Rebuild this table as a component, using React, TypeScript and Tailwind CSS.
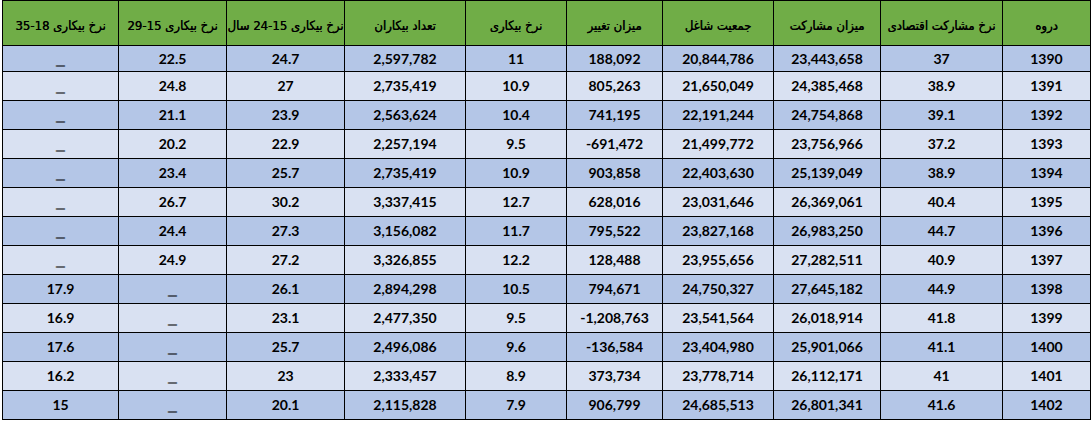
const headers = [
  'دروه',
  'نرخ مشارکت اقتصادی',
  'میزان مشارکت',
  'جمعیت شاغل',
  'میزان تغییر',
  'نرخ بیکاری',
  'تعداد بیکاران',
  'نرخ بیکاری 15-24 سال',
  'نرخ بیکاری 15-29',
  'نرخ بیکاری 18-35',
];

const widths = ['w-[88px]', 'w-[122px]', 'w-[107px]', 'w-[111px]', 'w-[96px]', 'w-[101px]', 'w-[121px]', 'w-[118px]', 'w-[108px]', 'w-[116px]'];

const rows = [
  ['1390', '37', '23,443,658', '20,844,786', '188,092', '11', '2,597,782', '24.7', '22.5', '_'],
  ['1391', '38.9', '24,385,468', '21,650,049', '805,263', '10.9', '2,735,419', '27', '24.8', '_'],
  ['1392', '39.1', '24,754,868', '22,191,244', '741,195', '10.4', '2,563,624', '23.9', '21.1', '_'],
  ['1393', '37.2', '23,756,966', '21,499,772', '-691,472', '9.5', '2,257,194', '22.9', '20.2', '_'],
  ['1394', '38.9', '25,139,049', '22,403,630', '903,858', '10.9', '2,735,419', '25.7', '23.4', '_'],
  ['1395', '40.4', '26,369,061', '23,031,646', '628,016', '12.7', '3,337,415', '30.2', '26.7', '_'],
  ['1396', '44.7', '26,983,250', '23,827,168', '795,522', '11.7', '3,156,082', '27.3', '24.4', '_'],
  ['1397', '40.9', '27,282,511', '23,955,656', '128,488', '12.2', '3,326,855', '27.2', '24.9', '_'],
  ['1398', '44.9', '27,645,182', '24,750,327', '794,671', '10.5', '2,894,298', '26.1', '_', '17.9'],
  ['1399', '41.8', '26,018,914', '23,541,564', '-1,208,763', '9.5', '2,477,350', '23.1', '_', '16.9'],
  ['1400', '41.1', '25,901,066', '23,404,980', '-136,584', '9.6', '2,496,086', '25.7', '_', '17.6'],
  ['1401', '41', '26,112,171', '23,778,714', '373,734', '8.9', '2,333,457', '23', '_', '16.2'],
  ['1402', '41.6', '26,801,341', '24,685,513', '906,799', '7.9', '2,115,828', '20.1', '_', '15'],
];

export default function App() {
  return (
    <div className="w-[1092px] h-[422px] bg-white overflow-hidden font-['Lato','DejaVu_Sans',sans-serif]">
      <table dir="rtl" className="ml-[2px] w-[1089px] table-fixed border-collapse text-black">
        <colgroup>
          {widths.map((w, i) => (
            <col key={i} className={w} />
          ))}
        </colgroup>
        <thead>
          <tr className="h-[45px] bg-[#70ad47]">
            {headers.map((h) => (
              <th
                key={h}
                className="border border-black px-0 pt-[5px] text-center text-[13px] font-normal whitespace-nowrap font-['DejaVu_Sans_Condensed','DejaVu_Sans',sans-serif] [text-shadow:0.3px_0_0_#000]"
              >
                {h}
              </th>
            ))}
          </tr>
        </thead>
        <tbody>
          {rows.map((r, i) => (
            <tr key={r[0]} className={`${i === 0 ? 'h-[26px]' : 'h-[29px]'} ${i % 2 === 0 ? 'bg-[#b4c6e7]' : 'bg-[#d9e1f2]'}`}>
              {r.map((v, j) => (
                <td key={j} className="border border-black p-0 text-center text-[14px] font-bold leading-none">
                  {v === '_' ? (
                    <span className="inline-block translate-y-[1px] text-[16px] font-['Liberation_Sans',sans-serif] [text-shadow:0_-1px_0_#000]">_</span>
                  ) : (
                    <span dir="ltr">{v}</span>
                  )}
                </td>
              ))}
            </tr>
          ))}
        </tbody>
      </table>
    </div>
  );
}
